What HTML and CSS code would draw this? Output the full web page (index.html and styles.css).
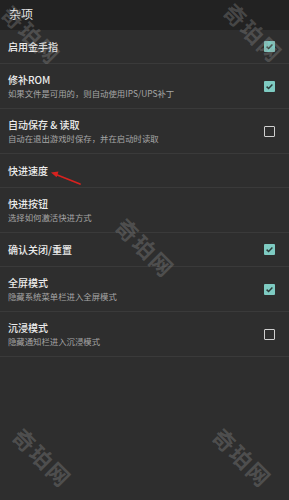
FILE: index.html
```html
<!DOCTYPE html>
<html lang="zh">
<head>
<meta charset="utf-8">
<link rel="stylesheet" href="styles.css">
</head>
<body>
<div class="screen">
  <header class="header">杂项</header>
  <ul class="list">
    <li class="row single">
      <div class="texts"><div class="title">启用金手指</div></div>
      <span class="cb on"><svg viewBox="0 0 11 11"><path d="M2.6 5.6 L4.6 7.5 L8.4 3.6" /></svg></span>
    </li>
    <li class="row double">
      <div class="texts"><div class="title">修补ROM</div><div class="sub">如果文件是可用的，则自动使用IPS/UPS补丁</div></div>
      <span class="cb on"><svg viewBox="0 0 11 11"><path d="M2.6 5.6 L4.6 7.5 L8.4 3.6" /></svg></span>
    </li>
    <li class="row double">
      <div class="texts"><div class="title">自动保存 &amp; 读取</div><div class="sub">自动在退出游戏时保存，并在启动时读取</div></div>
      <span class="cb off"></span>
    </li>
    <li class="row single">
      <div class="texts"><div class="title">快进速度</div></div>
    </li>
    <li class="row double">
      <div class="texts"><div class="title">快进按钮</div><div class="sub">选择如何激活快进方式</div></div>
    </li>
    <li class="row single">
      <div class="texts"><div class="title">确认关闭/重置</div></div>
      <span class="cb on"><svg viewBox="0 0 11 11"><path d="M2.6 5.6 L4.6 7.5 L8.4 3.6" /></svg></span>
    </li>
    <li class="row double">
      <div class="texts"><div class="title">全屏模式</div><div class="sub">隐藏系统菜单栏进入全屏模式</div></div>
      <span class="cb on"><svg viewBox="0 0 11 11"><path d="M2.6 5.6 L4.6 7.5 L8.4 3.6" /></svg></span>
    </li>
    <li class="row double">
      <div class="texts"><div class="title">沉浸模式</div><div class="sub">隐藏通知栏进入沉浸模式</div></div>
      <span class="cb off"></span>
    </li>
  </ul>

  <svg class="arrow" width="289" height="500" viewBox="0 0 289 500">
    <line x1="80" y1="184" x2="56" y2="174.5" stroke="#d8221f" stroke-width="1.8" stroke-linecap="round"/>
    <path d="M51 172.5 L58.5 171.6 L56.6 177.2 Z" fill="#d8221f"/>
  </svg>

  <span class="wm wm-tl">奇珀网</span>
  <span class="wm wm-tr">奇珀网</span>
  <span class="wm wm-m">奇珀网</span>
  <span class="wm wm-bl">奇珀网</span>
  <span class="wm wm-br">奇珀网</span>
</div>
</body>
</html>
```

FILE: styles.css
```css
html, body {
  margin: 0;
  padding: 0;
  background: #2e2e2e;
}
.screen {
  position: relative;
  width: 289px;
  height: 500px;
  overflow: hidden;
  background: #2e2e2e;
  font-family: "Noto Sans CJK SC", "Noto Sans", sans-serif;
}
.header {
  height: 30px;
  background: #222222;
  color: #e6e6e6;
  font-size: 12px;
  line-height: 28px;
  padding-left: 9px;
  box-sizing: border-box;
}
.list {
  list-style: none;
  margin: 0;
  padding: 0;
}
.row {
  display: flex;
  align-items: center;
  justify-content: space-between;
  padding: 0 14px 0 8px;
  border-bottom: 1px solid #3a3a3a;
  box-sizing: border-box;
}
.row.single { height: 34px; }
.row.double { height: 45px; }
.texts {
  display: flex;
  flex-direction: column;
}
.title {
  color: #ececec;
  font-size: 10px;
  line-height: 14px;
  font-weight: 500;
}
.sub {
  color: #a6a6a6;
  font-size: 8.4px;
  line-height: 12px;
}
.cb {
  width: 11px;
  height: 11px;
  box-sizing: border-box;
  flex: none;
  display: block;
}
.cb.on {
  background: #7ecbc2;
  border-radius: 1px;
}
.cb.on svg {
  display: block;
  width: 11px;
  height: 11px;
}
.cb.on path {
  fill: none;
  stroke: #2b3b3a;
  stroke-width: 1.5;
}
.cb.off {
  border: 1.5px solid #cfcfcf;
  border-radius: 1px;
}
.arrow {
  position: absolute;
  left: 0;
  top: 0;
  pointer-events: none;
}
.wm {
  position: absolute;
  width: 90px;
  height: 26px;
  margin-left: -45px;
  margin-top: -13px;
  text-align: center;
  font-size: 22px;
  line-height: 26px;
  font-weight: 700;
  letter-spacing: 2px;
  color: rgba(150, 150, 150, 0.32);
  transform: rotate(45deg);
  font-family: "Noto Sans CJK SC", sans-serif;
  pointer-events: none;
}
.wm-tl { left: 32px; top: 34px; }
.wm-tr { left: 254px; top: 32px; }
.wm-m { left: 146px; top: 247px; }
.wm-bl { left: 43px; top: 457px; }
.wm-br { left: 243px; top: 457px; }
```
